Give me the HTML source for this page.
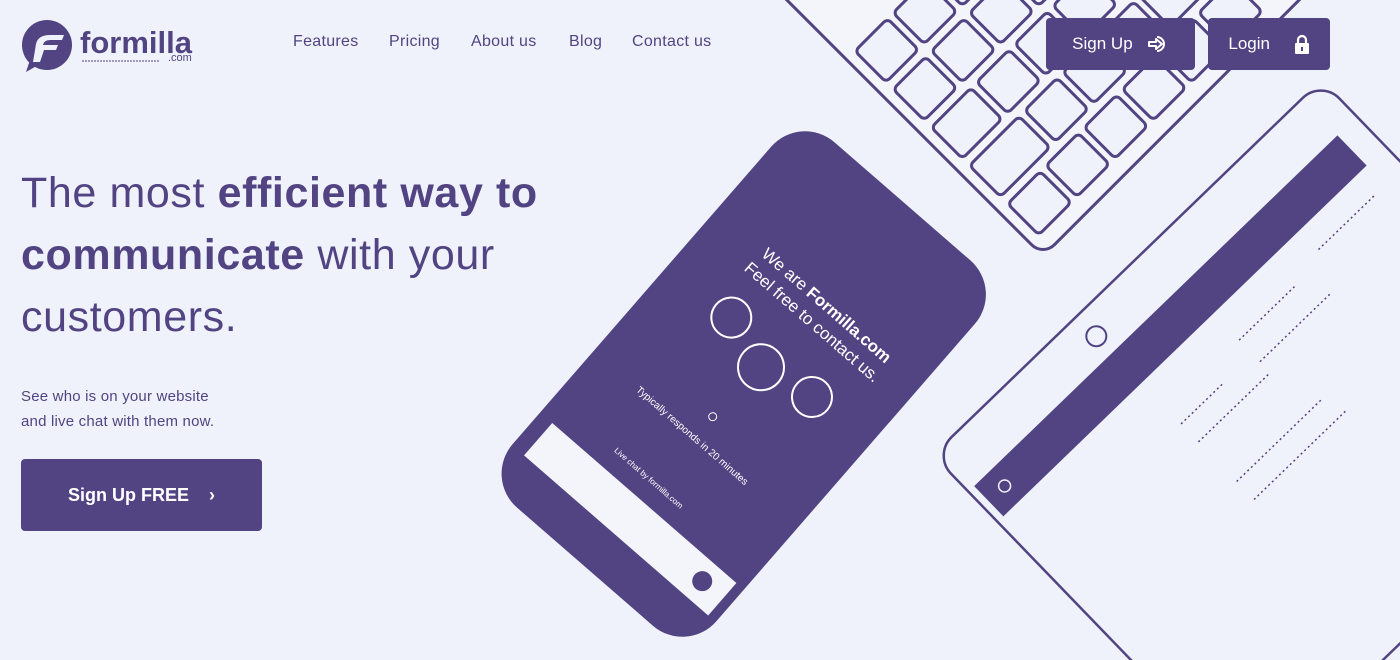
<!DOCTYPE html>
<html><head><meta charset="utf-8"><style>
body{margin:0;width:1400px;height:660px;overflow:hidden;background:#eff2fa;font-family:"Liberation Sans",sans-serif;color:#524482;position:relative}
.nav{position:absolute;top:33px;font-size:16px;color:#524482;letter-spacing:0.3px}
.btn{position:absolute;background:#524482;color:#fff;border-radius:4px;font-weight:bold;display:flex;align-items:center;justify-content:center}
h1{position:absolute;left:21px;top:162px;margin:0;font-weight:normal;font-size:43px;line-height:62px;color:#524482;width:580px;letter-spacing:0.6px}
p{position:absolute;left:21px;top:384px;margin:0;font-size:15px;line-height:25px;letter-spacing:0.2px}
</style></head><body>
<svg width="1400" height="660" style="position:absolute;left:0;top:0">
 <!-- keyboard -->
 <g transform="translate(1043,242) rotate(-45)">
  <rect x="-10" y="-600" width="420" height="610" rx="16" fill="#f4f5fb" stroke="#524482" stroke-width="3"/>
  <g fill="#eff2fa" stroke="#524482" stroke-width="3">
   <rect x="2" y="-52" width="46" height="44" rx="5"/><rect x="56" y="-52" width="46" height="44" rx="5"/><rect x="110" y="-52" width="46" height="44" rx="5"/><rect x="164" y="-52" width="46" height="44" rx="5"/><rect x="218" y="-52" width="46" height="44" rx="5"/><rect x="272" y="-52" width="46" height="44" rx="5"/>
   <rect x="2" y="-106" width="70" height="44" rx="5"/><rect x="80" y="-106" width="46" height="44" rx="5"/><rect x="134" y="-106" width="46" height="44" rx="5"/><rect x="188" y="-106" width="46" height="44" rx="5"/><rect x="242" y="-106" width="46" height="44" rx="5"/><rect x="296" y="-106" width="46" height="44" rx="5"/>
   <rect x="2" y="-160" width="56" height="44" rx="5"/><rect x="66" y="-160" width="46" height="44" rx="5"/><rect x="120" y="-160" width="46" height="44" rx="5"/><rect x="174" y="-160" width="46" height="44" rx="5"/><rect x="228" y="-160" width="46" height="44" rx="5"/><rect x="282" y="-160" width="46" height="44" rx="5"/>
   <rect x="2" y="-214" width="46" height="44" rx="5"/><rect x="56" y="-214" width="46" height="44" rx="5"/><rect x="110" y="-214" width="46" height="44" rx="5"/><rect x="164" y="-214" width="46" height="44" rx="5"/><rect x="218" y="-214" width="46" height="44" rx="5"/><rect x="272" y="-214" width="46" height="44" rx="5"/>
   <rect x="2" y="-268" width="46" height="44" rx="5"/><rect x="56" y="-268" width="46" height="44" rx="5"/><rect x="110" y="-268" width="46" height="44" rx="5"/><rect x="164" y="-268" width="46" height="44" rx="5"/><rect x="218" y="-268" width="46" height="44" rx="5"/>
  </g>
 </g>
 <!-- tablet -->
 <g transform="translate(933,455) rotate(-44)">
  <rect x="0" y="0" width="540" height="460" rx="26" fill="#eff2fa" stroke="#524482" stroke-width="2.5"/>
  <rect x="8" y="51" width="505" height="42" fill="#524482"/>
  <circle cx="30" cy="72" r="6" fill="none" stroke="#eff2fa" stroke-width="1.5"/>
  <circle cx="200" cy="28" r="10" fill="none" stroke="#524482" stroke-width="2"/>
  <g stroke="#524482" stroke-width="1.5" stroke-dasharray="2 3">
   <line x1="200" y1="150" x2="260" y2="150"/><line x1="200" y1="175" x2="300" y2="175"/><line x1="300" y1="130" x2="380" y2="130"/><line x1="300" y1="160" x2="400" y2="160"/><line x1="200" y1="230" x2="320" y2="230"/><line x1="200" y1="255" x2="330" y2="255"/><line x1="420" y1="120" x2="500" y2="120"/>
  </g>
  <rect x="360" y="300" width="120" height="24" fill="#7b6fa6"/>
  <rect x="470" y="230" width="70" height="24" fill="#7b6fa6"/>
 </g>
 <!-- phone -->
 <g transform="translate(746,386) rotate(41)">
  <rect x="-138" y="-242" width="270" height="484" rx="45" fill="#524482"/>
  <rect x="-122" y="155" width="244" height="43" fill="#f4f5fb"/>
  <circle cx="95" cy="176" r="10" fill="#524482"/>
  <text x="8" y="-108" fill="#fff" font-size="17" text-anchor="middle">We are <tspan font-weight="bold">Formilla.com</tspan></text>
  <text x="8" y="-86" fill="#fff" font-size="17" text-anchor="middle">Feel free to contact us.</text>
  <circle cx="-56" cy="-42" r="20" fill="none" stroke="#fff" stroke-width="2"/>
  <circle cx="-1" cy="-24" r="23" fill="none" stroke="#fff" stroke-width="2"/>
  <circle cx="57" cy="-35" r="20" fill="none" stroke="#fff" stroke-width="2"/>
  <text x="-8" y="76" fill="#fff" font-size="10" text-anchor="middle">Typically responds in 20 minutes</text>
  <circle cx="-5" cy="45" r="4" fill="none" stroke="#fff" stroke-width="1"/>
  <text x="-13" y="136" fill="#fff" font-size="8" text-anchor="middle">Live chat by formilla.com</text>
 </g>
 <!-- logo -->
 <circle cx="47" cy="45" r="25" fill="#524482"/>
 <path d="M30 60 L26 72 L40 64 Z" fill="#524482"/>
 <path d="M36 44 Q38 35 50 35 L64 35 L62 40 L50 40 Q44 40 43 45 L58 45 L56 50 L44 50 L40 62 L33 62 Z" fill="#eff2fa"/>
 <line x1="82" y1="61" x2="160" y2="61" stroke="#524482" stroke-width="1" stroke-dasharray="2 1"/>
</svg>
<div style="position:absolute;left:80px;top:25px;font-size:31px;font-weight:bold;color:#524482;letter-spacing:0px">formilla</div>
<div style="position:absolute;left:168px;top:52px;font-size:11px;color:#524482">.com</div>
<div class="nav" style="left:293px">Features</div>
<div class="nav" style="left:389px">Pricing</div>
<div class="nav" style="left:471px">About us</div>
<div class="nav" style="left:569px">Blog</div>
<div class="nav" style="left:632px">Contact us</div>
<div class="btn" style="left:1046px;top:18px;width:149px;height:52px;font-size:17px;font-weight:normal">Sign Up&nbsp;&nbsp;&nbsp;<svg width="22" height="20" viewBox="0 0 22 20"><path d="M10 3 A7 7 0 1 1 10 17" fill="none" stroke="#fff" stroke-width="2"/><path d="M2 8 H9 V5 L15 10 L9 15 V12 H2 Z" fill="none" stroke="#fff" stroke-width="2" stroke-linejoin="round"/></svg></div>
<div class="btn" style="left:1208px;top:18px;width:122px;height:52px;font-size:17px;font-weight:normal">Login&nbsp;&nbsp;&nbsp;&nbsp;&nbsp;<svg width="16" height="20" viewBox="0 0 16 20"><path d="M4 9 V6 A4 4 0 0 1 12 6 V9" fill="none" stroke="#fff" stroke-width="2.2"/><rect x="1" y="9" width="14" height="11" rx="1" fill="#fff"/><rect x="7" y="13" width="2" height="4" fill="#524482"/></svg></div>
<h1>The most <b>efficient way to communicate</b> with your customers.</h1>
<p>See who is on your website<br>and live chat with them now.</p>
<div class="btn" style="left:21px;top:459px;width:241px;height:72px;font-size:18px">Sign Up FREE&nbsp;&nbsp;&nbsp;&nbsp;›</div>
</body></html>
